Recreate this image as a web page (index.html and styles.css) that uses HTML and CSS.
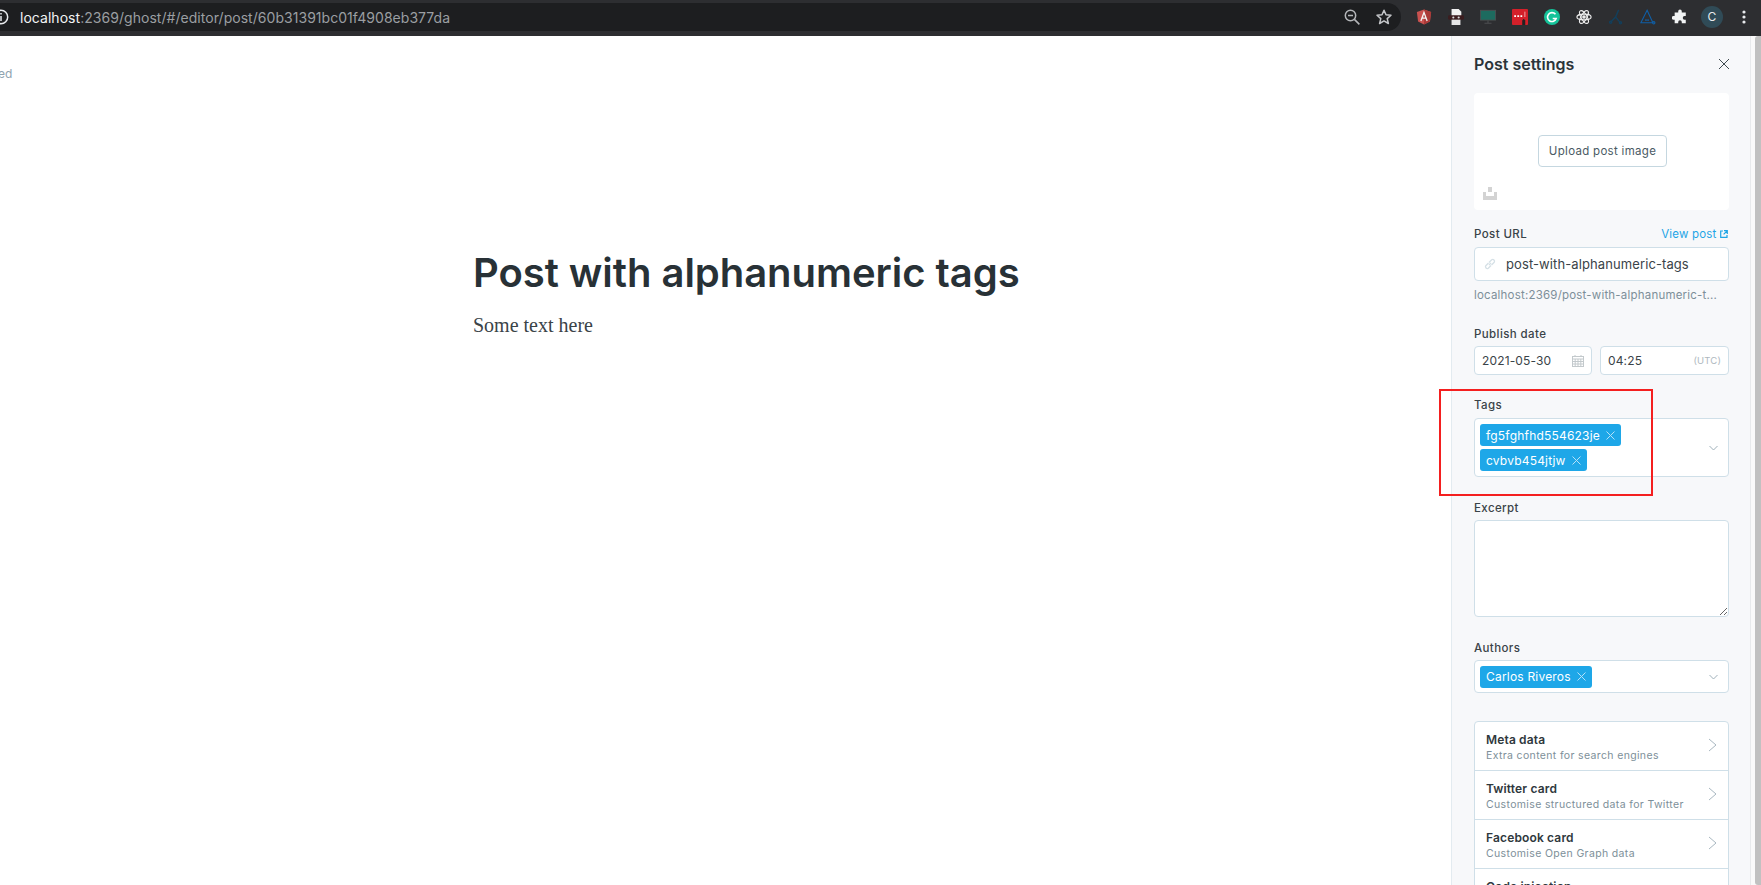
FILE: index.html
```html
<!DOCTYPE html>
<html lang="en">
<head>
    <meta charset="UTF-8">
    <title>Post with alphanumeric tags</title>
    <link rel="stylesheet" href="styles.css">
</head>
<body>
    <div class="toolbar">
        <div class="address">
            <svg class="info-icon" width="18" height="18" viewBox="0 0 18 18" fill="none" stroke="#e8eaed" stroke-width="1.5"><circle cx="9" cy="9" r="6.7"/><path d="M9 8v5M9 5v1.6"/></svg>
            <div class="url"><span class="host">localhost</span>:2369/ghost/#/editor/post/60b31391bc01f4908eb377da</div>
            <svg class="addr-icon" width="18" height="18" viewBox="0 0 18 18" fill="none" stroke="#b4b6b9" stroke-width="1.5"><circle cx="7.500" cy="7.500" r="5.200"/><path d="M11.400 11.400l5 5M5 7.500h5"/></svg>
            <svg class="addr-icon" width="18" height="18" viewBox="0 0 18 18" fill="none" stroke="#c4c6c9" stroke-width="1.5"><path d="M9 2.200l2 4.600 5 .5-3.800 3.300 1.200 4.900L9 12.900l-4.400 2.600 1.200-4.900L2 7.300l5-.5z" stroke-linejoin="round"/></svg>
        </div>
        <div class="extensions">
            <div class="ext"><svg width="16" height="16" viewBox="0 0 18 18"><path d="M9 .5l8 2.800-1.300 10.700L9 17.500 2.300 14 1 3.300z" fill="#c9514f"/><path d="M9 .5l8 2.800-1.300 10.700L9 17.500z" fill="#a93a38"/><path d="M5.500 13.500L9 3.800l3.500 9.700M6.800 10.200h4.400" fill="none" stroke="#f3f3f3" stroke-width="1.500"/></svg></div>
            <div class="ext"><svg width="16" height="16" viewBox="0 0 18 18"><path d="M4 0h8l3 3v5H4z" fill="#f1f1f1"/><rect x="0" y="7" width="18" height="5" rx="1.500" fill="#3b1d1f"/><circle cx="6" cy="9.500" r="1.200" fill="#ddd"/><circle cx="12" cy="9.500" r="1.200" fill="#ddd"/><path d="M4 12h10v6H4z" fill="#e6e6e6"/></svg></div>
            <div class="ext"><svg width="16" height="16" viewBox="0 0 18 18"><rect x="0.500" y="1.500" width="17" height="11" fill="#1d6b5f" stroke="#4c4e50" stroke-width="1"/><path d="M5 16h8M9 13v3" stroke="#4c4e50" stroke-width="1.200"/></svg></div>
            <div class="ext"><svg width="16" height="16" viewBox="0 0 18 18"><rect x="0" y="0" width="18" height="18" rx="1" fill="#d3202a"/><path d="M2.500 8h2M6 8h2M9.500 8h2" stroke="#fff" stroke-width="2"/><path d="M14.500 3v6" stroke="#f6b0b0" stroke-width="1"/><path d="M11.500 18v-5l1.700-2 1.700 2v5z" fill="#222"/></svg></div>
            <div class="ext"><svg width="16" height="16" viewBox="0 0 18 18"><circle cx="9" cy="9" r="9" fill="#15c39a"/><path d="M12.900 6A5 5 0 1 0 13.700 10.700H9.800" fill="none" stroke="#fff" stroke-width="1.800"/></svg></div>
            <div class="ext"><svg width="16" height="16" viewBox="0 0 18 18" fill="none" stroke="#ececec" stroke-width="1.300"><ellipse cx="9" cy="9" rx="8" ry="3.200"/><ellipse cx="9" cy="9" rx="8" ry="3.200" transform="rotate(60 9 9)"/><ellipse cx="9" cy="9" rx="8" ry="3.200" transform="rotate(120 9 9)"/><circle cx="9" cy="9" r="1.400" fill="#ececec"/></svg></div>
            <div class="ext"><svg width="16" height="16" viewBox="0 0 18 18" fill="none" stroke="#123f5c" stroke-width="1.600"><path d="M12 1L8.500 9 3 14.500M8.500 9l5 6"/><circle cx="3" cy="15" r="1.200"/><circle cx="14" cy="15.500" r="1.200"/></svg></div>
            <div class="ext"><svg width="16" height="16" viewBox="0 0 18 18" fill="none" stroke="#0f5fa8" stroke-width="1.200"><path d="M8 1.500L1 15.500h13.500z"/><circle cx="15.500" cy="15.500" r="1.300"/><path d="M6 12.500h4" stroke-width="2" stroke-dasharray="1.500 .8"/></svg></div>
            <div class="ext"><svg width="16" height="16" viewBox="0 0 18 18" fill="#f1f3f4"><path d="M7 2.500a2 2 0 0 1 4 0V4h4.500v4h-1.400a2 2 0 0 0 0 4h1.400v4H11v-1.300a2 2 0 0 0-4 0V16H3v-4H1.600a2 2 0 0 1 0-4H3V4h4z"/></svg></div>
            <div class="ext"><div class="avatar">C</div></div>
            <div class="ext"><svg width="4" height="14" viewBox="0 0 4 14" fill="#e8eaed"><circle cx="2" cy="2" r="1.600"/><circle cx="2" cy="7" r="1.600"/><circle cx="2" cy="12" r="1.600"/></svg></div>
        </div>
    </div>

    <div class="page">
        <div class="editor">
            <div class="status">ed</div>
            <h1 class="post-title">Post with alphanumeric tags</h1>
            <p class="post-text">Some text here</p>
        </div>

        <div class="panel">
            <div class="panel-head">
                <h2>Post settings</h2>
                <svg width="12" height="12" viewBox="0 0 12 12" stroke="#3f4a50" stroke-width="1"><path d="M1 1l10 10M11 1L1 11"/></svg>
            </div>

            <div class="image-box">
                <button class="upload-btn">Upload post image</button>
                <svg class="image-icon" width="14" height="13" viewBox="0 0 14 13" fill="#d3d3d3"><path d="M5 0h4v5H5zM0 5h3v4h8V5h3v8H0z"/></svg>
            </div>

            <div class="field url-field">
                <div class="label-row">
                    <label>Post URL</label>
                    <a class="view-link">View post <svg width="8" height="8" viewBox="0 0 8 8" fill="none" stroke="#1fa5e6" stroke-width="1.200"><path d="M3 1H.7v6.300H7V5M4 .7h3.300V4M7 1L3.600 4.400"/></svg></a>
                </div>
                <div class="input slug">
                    <svg width="12" height="12" viewBox="0 0 12 12" fill="none" stroke="#d5e0e6" stroke-width="1.300"><path d="M5 7l2-2M4.500 5L1.800 7.700a1.800 1.800 0 0 0 2.500 2.500L7 7.500M5 4.500l2.700-2.700a1.800 1.800 0 0 1 2.500 2.500L7.500 7"/></svg>
                    <span>post-with-alphanumeric-tags</span>
                </div>
                <div class="hint">localhost:2369/post-with-alphanumeric-t...</div>
            </div>

            <div class="field date-field">
                <label>Publish date</label>
                <div class="date-row">
                    <div class="input date">
                        <span>2021-05-30</span>
                        <svg width="12" height="12" viewBox="0 0 12 12" fill="none" stroke="#c3c9cc" stroke-width="1"><rect x=".5" y="1.500" width="11" height="10"/><path d="M.5 4h11M.5 6.500h11M.5 9h11M3.200 4v7.500M6 4v7.500M8.800 4v7.500M3 0v2M9 0v2"/></svg>
                    </div>
                    <div class="input time">
                        <span>04:25</span>
                        <small>(UTC)</small>
                    </div>
                </div>
            </div>

            <div class="field tags-field">
                <label>Tags</label>
                <div class="input select tags">
                    <div class="chips">
                        <div class="chip">fg5fghfhd554623je <svg width="9" height="9" viewBox="0 0 9 9" stroke="#b5e1f8" stroke-width="1"><path d="M.5.5l8 8M8.500.5l-8 8"/></svg></div>
                        <div class="chip">cvbvb454jtjw <svg width="9" height="9" viewBox="0 0 9 9" stroke="#b5e1f8" stroke-width="1"><path d="M.5.5l8 8M8.500.5l-8 8"/></svg></div>
                    </div>
                    <svg class="caret" width="9" height="6" viewBox="0 0 9 6" fill="none" stroke="#9fb0ba" stroke-width="1"><path d="M.5 1l4 4 4-4"/></svg>
                </div>
            </div>

            <div class="field excerpt-field">
                <label>Excerpt</label>
                <textarea class="excerpt"></textarea>
            </div>

            <div class="field authors-field">
                <label>Authors</label>
                <div class="input select authors">
                    <div class="chips">
                        <div class="chip">Carlos Riveros <svg width="9" height="9" viewBox="0 0 9 9" stroke="#b5e1f8" stroke-width="1"><path d="M.5.5l8 8M8.500.5l-8 8"/></svg></div>
                    </div>
                    <svg class="caret" width="9" height="6" viewBox="0 0 9 6" fill="none" stroke="#9fb0ba" stroke-width="1"><path d="M.5 1l4 4 4-4"/></svg>
                </div>
            </div>

            <div class="menu">
                <div class="menu-row">
                    <div class="menu-text"><b>Meta data</b><span>Extra content for search engines</span></div>
                    <svg width="9" height="14" viewBox="0 0 9 14" fill="none" stroke="#a9b8c1" stroke-width="1"><path d="M1 1l7 6-7 6"/></svg>
                </div>
                <div class="menu-row">
                    <div class="menu-text"><b>Twitter card</b><span>Customise structured data for Twitter</span></div>
                    <svg width="9" height="14" viewBox="0 0 9 14" fill="none" stroke="#a9b8c1" stroke-width="1"><path d="M1 1l7 6-7 6"/></svg>
                </div>
                <div class="menu-row">
                    <div class="menu-text"><b>Facebook card</b><span>Customise Open Graph data</span></div>
                    <svg width="9" height="14" viewBox="0 0 9 14" fill="none" stroke="#a9b8c1" stroke-width="1"><path d="M1 1l7 6-7 6"/></svg>
                </div>
                <div class="menu-row">
                    <div class="menu-text"><b>Code injection</b><span>Add styles and scripts</span></div>
                    <svg width="9" height="14" viewBox="0 0 9 14" fill="none" stroke="#a9b8c1" stroke-width="1"><path d="M1 1l7 6-7 6"/></svg>
                </div>
            </div>

            <div class="highlight"></div>
        </div>

        <div class="scrollbar"><div class="thumb"></div></div>
    </div>
</body>
</html>
```

FILE: styles.css
```css
* { box-sizing: border-box; }
html, body { height: 100%; }
body { margin: 0; overflow: hidden; font-family: 'Inter', 'Liberation Sans', sans-serif; background-color: #fff; color: #2b3439; }

.toolbar { display: flex; height: 36px; padding-top: 3px; background-color: #2d2e31; }
.address { display: flex; align-items: center; width: 1401px; height: 28px; padding-right: 8px; background-color: #1d1e20; border-radius: 0 14px 14px 0; }
.info-icon { margin-left: -8px; flex-shrink: 0; }
.url { flex: 1; margin-left: 10px; font-size: 14px; letter-spacing: 0.04px; color: #9b9ea2; white-space: nowrap; }
.url .host { color: #f1f3f4; }
.addr-icon { margin-left: 14px; flex-shrink: 0; }
.extensions { display: flex; margin-left: 7px; height: 28px; }
.ext { display: flex; align-items: center; justify-content: center; width: 32px; height: 28px; }
.avatar { width: 22px; height: 22px; border-radius: 50%; background-color: #304b57; color: #e8eaed; font-size: 12px; line-height: 22px; text-align: center; }

.page { display: flex; height: 849px; overflow: hidden; }
.editor { flex: 1; padding: 0 0 0 473px; position: relative; }
.status { position: absolute; left: -2px; top: 30px; font-size: 12px; color: #8fa3b0; }
.post-title { margin: 0; padding-top: 213px; font-size: 40px; line-height: 48px; font-weight: 600; letter-spacing: -0.04px; color: #283136; white-space: nowrap; }
.post-text { margin: 0; padding-top: 15px; font-family: 'Liberation Serif', serif; font-size: 20px; line-height: 26px; color: #3a4348; }

.panel { position: relative; width: 300px; flex-shrink: 0; padding: 0 21px 0 22px; background-color: #f7f8fa; border-left: 1px solid #e3ebf0; border-right: 1px solid #e8eaec; }
.panel-head { display: flex; align-items: center; justify-content: space-between; height: 57px; padding-bottom: 2px; }
.panel-head h2 { margin: 0; font-size: 16px; font-weight: 600; color: #2b3439; }
.panel-head svg { margin-right: -1px; }

.image-box { position: relative; display: flex; align-items: center; justify-content: center; height: 117px; background-color: #fff; border-radius: 4px; }
.upload-btn { height: 32px; width: 129px; padding: 0; margin: -1px 0 0 2px; font: 400 11.5px 'Inter', sans-serif; letter-spacing: 0.3px; color: #4a5a64; background-color: #fff; border: 1px solid #c5d7e0; border-radius: 4px; }
.image-icon { position: absolute; left: 9px; bottom: 10px; }

label { display: block; font-size: 11.5px; font-weight: 500; letter-spacing: 0.4px; color: #3a4348; line-height: 14px; }
.input { display: flex; align-items: center; background-color: #fff; border: 1px solid #cfdfe8; border-radius: 4px; font-size: 12px; color: #3a4348; }

.field { margin: 0; }
.url-field { padding-top: 17px; }
.label-row { display: flex; justify-content: space-between; align-items: center; }
.view-link { margin-right: 1px; font-size: 11.5px; letter-spacing: 0.2px; color: #1fa5e6; }
.slug { height: 34px; margin-top: 6px; padding-left: 9px; font-size: 13px; letter-spacing: 0.1px; }
.slug span { margin-left: 10px; }
.hint { margin-top: 7px; font-size: 11.5px; letter-spacing: 0.2px; line-height: 14px; color: #7d8f99; white-space: nowrap; }

.date-field { padding-top: 25px; }
.date-row { display: flex; gap: 8px; margin-top: 5px; }
.date, .time { height: 29px; justify-content: space-between; padding: 0 7px; letter-spacing: 0.15px; }
.date { width: 118px; }
.time { flex: 1; }
.time small { font-size: 9.5px; color: #aeb8be; }

.tags-field { padding-top: 23px; }
.tags { margin-top: 6px; height: 59px; }
.select { justify-content: space-between; padding: 0 10px 0 5px; }
.chips { display: flex; flex-direction: column; align-items: flex-start; gap: 3px; }
.chip { display: flex; align-items: center; gap: 6px; height: 22px; padding: 0 6px; font-size: 12px; letter-spacing: 0.2px; color: #fff; background-color: #1ea7e8; border-radius: 3px; white-space: nowrap; }

.excerpt-field { padding-top: 24px; }
.excerpt { display: block; width: 100%; height: 97px; margin-top: 5px; background-color: #fff; border: 1px solid #cfdfe8; border-radius: 4px; }

.authors-field { padding-top: 24px; }
.authors { margin-top: 5px; height: 33px; }

.menu { margin-top: 28px; background-color: #fff; border: 1px solid #cfdfe8; border-radius: 4px; }
.menu-row { display: flex; align-items: center; justify-content: space-between; height: 49px; padding: 0 11px; border-bottom: 1px solid #cfdfe8; }
.menu-row svg { margin-bottom: 2px; }
.menu-text { padding-top: 2px; }
.menu-row b { display: block; font-size: 12px; font-weight: 600; line-height: 16px; letter-spacing: 0.15px; color: #2f383d; }
.menu-row span { display: block; margin-top: 1px; font-size: 10.5px; letter-spacing: 0.35px; line-height: 14px; color: #7d8f99; white-space: nowrap; }

.highlight { position: absolute; left: -13px; top: 353px; width: 214px; height: 107px; border: 2px solid #f41f1f; pointer-events: none; }

.scrollbar { width: 10px; flex-shrink: 0; padding-left: 4px; background-color: #fafafa; }
.thumb { width: 6px; height: 849px; background-color: #c1c1c1; border-radius: 3px 0 0 3px; }
```
